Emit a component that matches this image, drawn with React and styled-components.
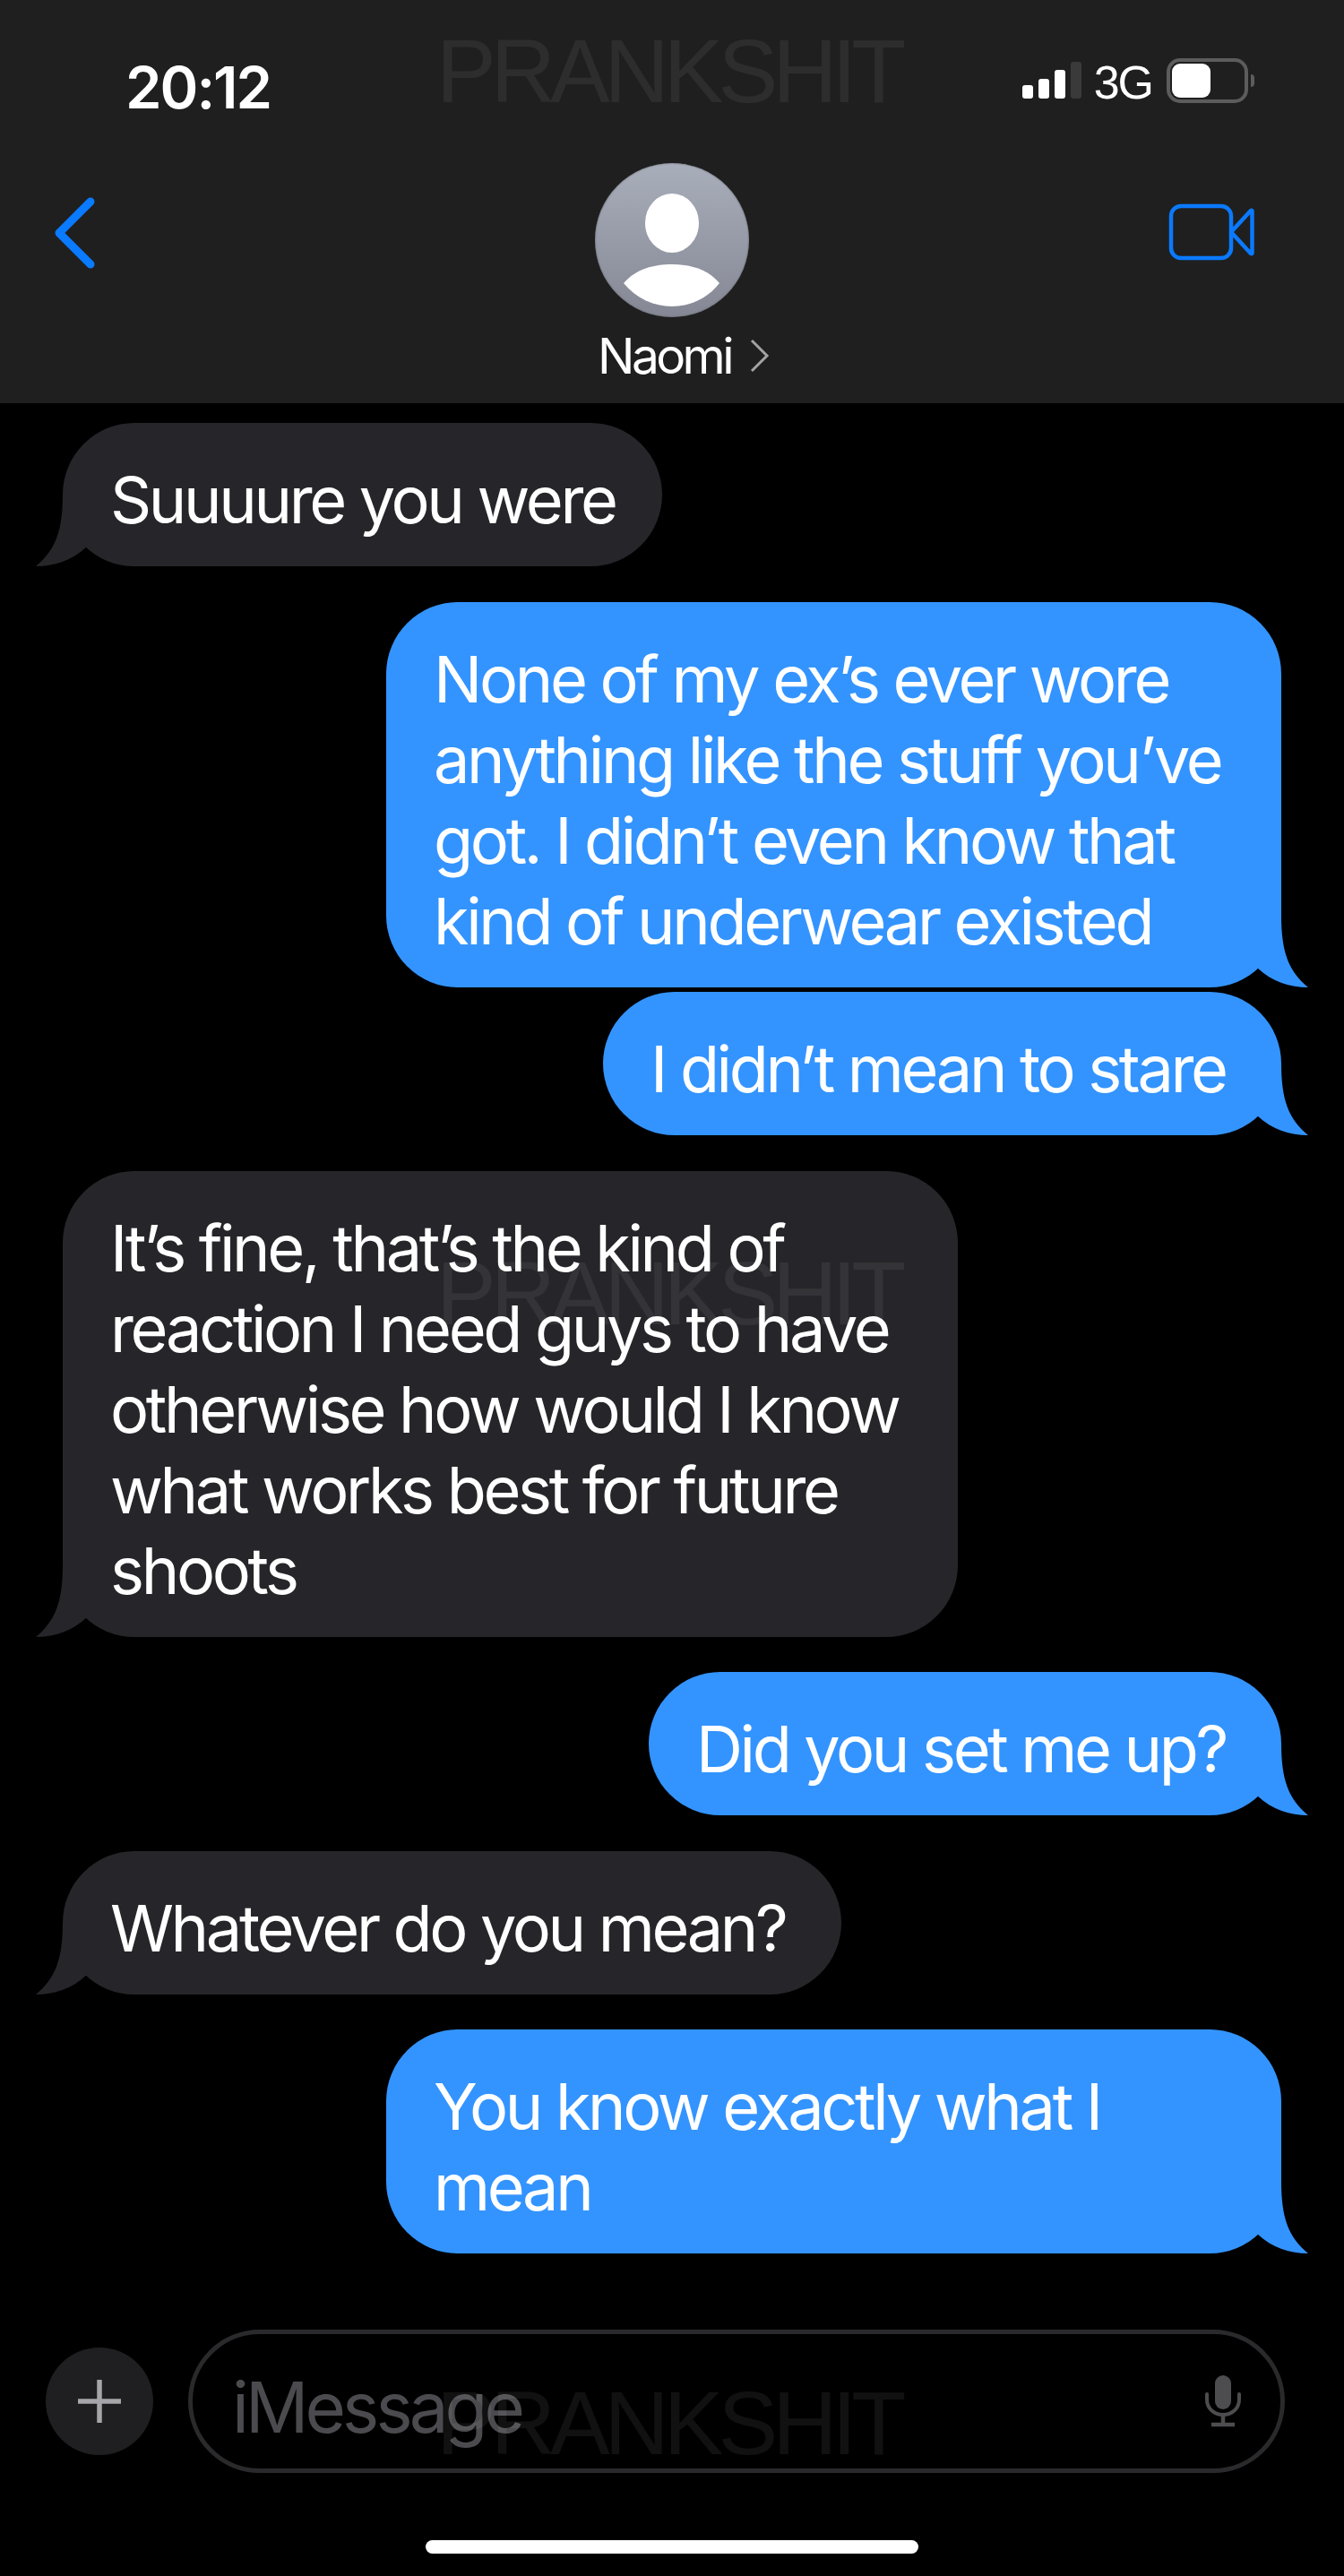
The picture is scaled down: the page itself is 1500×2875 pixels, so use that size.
import styled, { createGlobalStyle } from "styled-components";

const GlobalStyle = createGlobalStyle`
  html, body {
    margin: 0;
    padding: 0;
    background: #000;
  }
`;

const messages = [
  { from: "them", width: 669, lines: ["Suuuure you were"] },
  {
    from: "me",
    width: 999,
    lines: ["None of my ex’s ever wore", "anything like the stuff you’ve", "got. I didn’t even know that", "kind of underwear existed"],
  },
  { from: "me", width: 757, tight: true, lines: ["I didn’t mean to stare"] },
  {
    from: "them",
    width: 999,
    lines: ["It’s fine, that’s the kind of", "reaction I need guys to have", "otherwise how would I know", "what works best for future", "shoots"],
  },
  { from: "me", width: 706, lines: ["Did you set me up?"] },
  { from: "them", width: 869, lines: ["Whatever do you mean?"] },
  { from: "me", width: 999, lines: ["You know exactly what I", "mean"] },
];

export default function App() {
  return (
    <Page>
      <GlobalStyle />
      <Header>
        <StatusBar>
          <Clock>20:12</Clock>
          <StatusIcons>
            <SignalBars>
              <Bar $h={15} />
              <Bar $h={22} />
              <Bar $h={32} />
              <Bar $h={41} $off />
            </SignalBars>
            <Network>3G</Network>
            <Battery>
              <BatteryFill />
            </Battery>
            <BatteryNub />
          </StatusIcons>
        </StatusBar>
        <NavBar>
          <BackIcon width="46" height="80" viewBox="0 0 46 80">
            <path d="M41 5 L6 40 L41 75" fill="none" stroke="#0a7aff" strokeWidth="9" strokeLinecap="round" strokeLinejoin="round" />
          </BackIcon>
          <Contact>
            <Avatar>
              <svg width="172" height="172" viewBox="0 0 172 172">
                <ellipse cx="86" cy="67" rx="30" ry="33" fill="#fff" />
                <path d="M32 134 C46 118 66 113 86 113 C106 113 126 118 139 134 C126 151 106 160 86 160 C66 160 46 151 32 134 Z" fill="#fff" />
              </svg>
            </Avatar>
            <ContactName>
              Naomi
              <svg width="22" height="38" viewBox="0 0 22 38">
                <path d="M2 2 L19 19 L2 36" fill="none" stroke="#a3a3a3" strokeWidth="3" />
              </svg>
            </ContactName>
          </Contact>
          <VideoIcon width="96" height="64" viewBox="0 0 96 64">
            <rect x="3" y="3" width="67" height="58" rx="11" fill="none" stroke="#0a7aff" strokeWidth="4.5" />
            <path d="M70 32 L92 8 Q93.500 7 93.500 9 L93.500 55 Q93.500 57 92 56 L70 32 Z" fill="none" stroke="#0a7aff" strokeWidth="4.5" strokeLinejoin="round" />
          </VideoIcon>
        </NavBar>
      </Header>

      <Thread>
        {messages.map((message, i) => (
          <Bubble key={i} $me={message.from === "me"} $width={message.width} $tight={message.tight}>
            {message.lines.map((line) => (
              <Line key={line}>{line}</Line>
            ))}
            <Tail $me={message.from === "me"} width="80" height="80" viewBox="0 0 80 80">
              <path d="M50 0 C50 40 58 62 80 80 C60 80 40 74 23 58 L0 40 Z" />
            </Tail>
          </Bubble>
        ))}
      </Thread>

      <Composer>
        <PlusButton>
          <svg width="48" height="48" viewBox="0 0 48 48">
            <path d="M24 1 V47 M1 24 H47" stroke="#a5a5aa" strokeWidth="5.500" strokeLinecap="round" />
          </svg>
        </PlusButton>
        <InputField>
          <Placeholder>iMessage</Placeholder>
          <svg width="40" height="58" viewBox="0 0 40 58">
            <rect x="11" y="0" width="18" height="38" rx="9" fill="#4d4d4f" />
            <path d="M2 21 V27 C2 37 10 44 20 44 C30 44 38 37 38 27 V21" fill="none" stroke="#4d4d4f" strokeWidth="4" strokeLinecap="round" />
            <path d="M20 44 V54 M7 55 H33" fill="none" stroke="#4d4d4f" strokeWidth="4.500" />
          </svg>
        </InputField>
      </Composer>

      <HomeBar />

      <Watermark $top={22}>PRANKSHIT</Watermark>
      <Watermark $top={1386}>PRANKSHIT</Watermark>
      <Watermark $top={2647}>PRANKSHIT</Watermark>
    </Page>
  );
}

const Page = styled.div`
  position: relative;
  width: 1500px;
  height: 2875px;
  overflow: hidden;
  background: #000;
  color: #fff;
  font-family: Inter, "Liberation Sans", sans-serif;
`;

const Header = styled.header`
  height: 450px;
  box-sizing: border-box;
  background: #1f1f1f;
  display: flex;
  flex-direction: column;
`;

const StatusBar = styled.div`
  height: 182px;
  box-sizing: border-box;
  padding: 60px 100px 0 140px;
  display: flex;
  justify-content: space-between;
  align-items: flex-start;
`;

const Clock = styled.div`
  font-size: 65px;
  line-height: 76px;
  font-weight: 600;
  letter-spacing: -2px;
`;

const StatusIcons = styled.div`
  display: flex;
  align-items: flex-start;
  margin-top: 5px;
`;

const SignalBars = styled.div`
  display: flex;
  align-items: flex-end;
  gap: 6px;
  height: 45px;
  margin-right: 14px;
`;

const Bar = styled.div`
  width: 12px;
  height: ${(p) => p.$h}px;
  border-radius: 3px;
  background: ${(p) => (p.$off ? "#3a3a3a" : "#fff")};
`;

const Network = styled.div`
  font-size: 52px;
  line-height: 54px;
  letter-spacing: -2px;
  margin-right: 16px;
  font-family: "Liberation Sans", sans-serif;
`;

const Battery = styled.div`
  width: 91px;
  height: 50px;
  box-sizing: border-box;
  border: 4px solid #5c5c5c;
  border-radius: 15px;
  padding: 2px;
`;

const BatteryFill = styled.div`
  width: 43px;
  height: 100%;
  background: #fff;
  border-radius: 9px;
`;

const BatteryNub = styled.div`
  width: 4px;
  height: 14px;
  margin: 18px 0 0 3px;
  background: #5c5c5c;
  border-radius: 0 4px 4px 0;
`;

const NavBar = styled.div`
  flex: 1;
  padding: 0 100px;
  display: grid;
  grid-template-columns: 1fr 172px 1fr;
  align-items: start;
`;

const BackIcon = styled.svg`
  margin: 38px 0 0 -40px;
`;

const VideoIcon = styled.svg`
  justify-self: end;
  margin-top: 45px;
`;

const Contact = styled.div`
  display: flex;
  flex-direction: column;
  align-items: center;
`;

const Avatar = styled.div`
  width: 172px;
  height: 172px;
  flex: none;
  border-radius: 50%;
  overflow: hidden;
  background: linear-gradient(#a9aebb, #858894);
  box-shadow: inset 0 0 2px #55575f;
`;

const ContactName = styled.div`
  position: relative;
  left: 13px;
  display: flex;
  align-items: center;
  gap: 21px;
  margin-top: 12px;
  font-size: 55px;
  line-height: 62px;
  letter-spacing: -3.6px;
  white-space: nowrap;
`;

const Thread = styled.main`
  height: 2150px;
  box-sizing: border-box;
  padding: 22px 70px 0;
  display: flex;
  flex-direction: column;
`;

const Bubble = styled.div`
  position: relative;
  box-sizing: border-box;
  width: ${(p) => p.$width}px;
  padding: 41px 53px 29px;
  margin-top: ${(p) => (p.$tight ? 5.5 : 39.5)}px;
  border-radius: 80px;
  align-self: ${(p) => (p.$me ? "flex-end" : "flex-start")};
  background: ${(p) => (p.$me ? "#3394ff" : "#26262a")};
  color: #fff;
  fill: ${(p) => (p.$me ? "#3394ff" : "#26262a")};
  font-size: 72px;
  line-height: 90px;
  letter-spacing: -3.35px;

  &:first-child {
    margin-top: 0;
  }
`;

const Line = styled.div`
  white-space: nowrap;
`;

const Tail = styled.svg`
  position: absolute;
  bottom: 0;
  ${(p) => (p.$me ? "right: -30px;" : "left: -30px; transform: scaleX(-1);")}
`;

const Composer = styled.div`
  height: 160px;
  padding: 0 66px 0 51px;
  display: flex;
  align-items: center;
  gap: 39px;
`;

const PlusButton = styled.div`
  flex: none;
  width: 120px;
  height: 120px;
  border-radius: 50%;
  background: #1f1f21;
  display: flex;
  align-items: center;
  justify-content: center;
`;

const InputField = styled.div`
  flex: 1;
  height: 160px;
  box-sizing: border-box;
  border: 5px solid #2a2a2c;
  border-radius: 80px;
  padding: 0 44px 0 44px;
  display: flex;
  align-items: center;
  justify-content: space-between;
`;

const Placeholder = styled.div`
  padding-top: 14px;
  font-size: 78px;
  line-height: 90px;
  letter-spacing: -3.9px;
  color: #4b4b4f;
`;

const HomeBar = styled.div`
  width: 550px;
  height: 15px;
  margin: 75px auto 0;
  border-radius: 8px;
  background: #fff;
`;

const Watermark = styled.div`
  position: absolute;
  top: ${(p) => p.$top}px;
  left: 487px;
  font-family: "Liberation Sans", sans-serif;
  font-size: 100px;
  line-height: 115px;
  letter-spacing: -6px;
  color: rgba(255, 255, 255, 0.065);
  pointer-events: none;
`;
